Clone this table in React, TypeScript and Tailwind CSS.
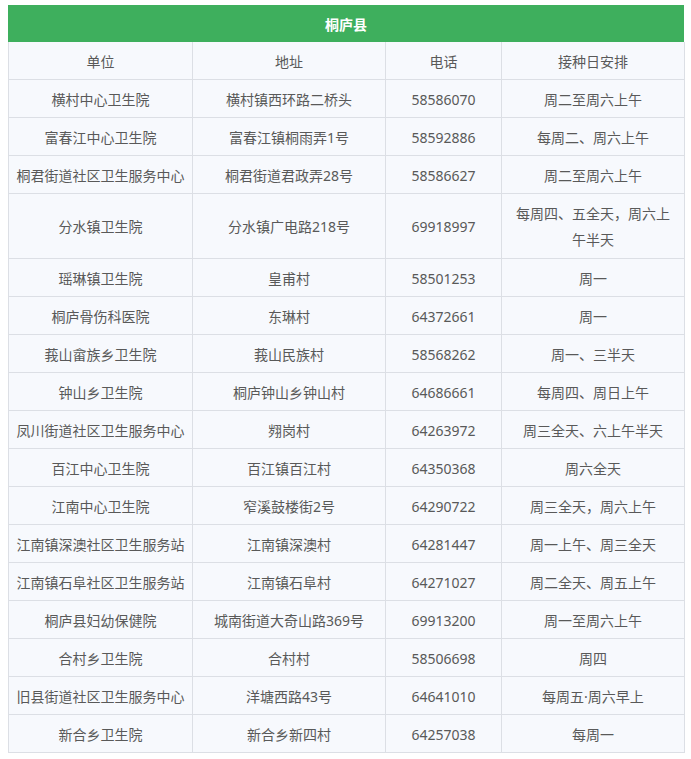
import React from "react";

const rows: [string, string, string, React.ReactNode, boolean?][] = [
  ["横村中心卫生院", "横村镇西环路二桥头", "58586070", "周二至周六上午"],
  ["富春江中心卫生院", "富春江镇桐雨弄1号", "58592886", "每周二、周六上午"],
  ["桐君街道社区卫生服务中心", "桐君街道君政弄28号", "58586627", "周二至周六上午"],
  ["分水镇卫生院", "分水镇广电路218号", "69918997", (<>每周四、五全天，周六上<br />午半天</>), true],
  ["瑶琳镇卫生院", "皇甫村", "58501253", "周一"],
  ["桐庐骨伤科医院", "东琳村", "64372661", "周一"],
  ["莪山畲族乡卫生院", "莪山民族村", "58568262", "周一、三半天"],
  ["钟山乡卫生院", "桐庐钟山乡钟山村", "64686661", "每周四、周日上午"],
  ["凤川街道社区卫生服务中心", "翙岗村", "64263972", "周三全天、六上午半天"],
  ["百江中心卫生院", "百江镇百江村", "64350368", "周六全天"],
  ["江南中心卫生院", "窄溪鼓楼街2号", "64290722", "周三全天，周六上午"],
  ["江南镇深澳社区卫生服务站", "江南镇深澳村", "64281447", "周一上午、周三全天"],
  ["江南镇石阜社区卫生服务站", "江南镇石阜村", "64271027", "周二全天、周五上午"],
  ["桐庐县妇幼保健院", "城南街道大奇山路369号", "69913200", "周一至周六上午"],
  ["合村乡卫生院", "合村村", "58506698", "周四"],
  ["旧县街道社区卫生服务中心", "洋塘西路43号", "64641010", "每周五·周六早上"],
  ["新合乡卫生院", "新合乡新四村", "64257038", "每周一"],
];

function Cell({ children, tall }: { children: React.ReactNode; tall?: boolean }) {
  return (
    <div
      className={`flex items-center justify-center text-center whitespace-nowrap border-r border-b border-[#dcdfe5] leading-[26px] pt-[2px] ${tall ? "h-[65px]" : "h-[38px]"}`}
    >
      <span>{children}</span>
    </div>
  );
}

export default function App() {
  return (
    <div className="bg-white w-[691px] h-[759px] pt-[5px] pl-[8px] font-['Noto_Sans','Noto_Sans_CJK_SC',sans-serif] text-[14px] text-[#595959]">
      <div className="w-[676px]">
        <div className="h-[37px] bg-[#3eaf5d] flex items-center justify-center text-white font-bold pt-[1px]">
          桐庐县
        </div>
        <div className="grid grid-cols-[184px_193px_116px_183px] border-l border-[#dcdfe5] bg-[#f7f9fd]">
          <Cell>单位</Cell>
          <Cell>地址</Cell>
          <Cell>电话</Cell>
          <Cell>接种日安排</Cell>
          {rows.map((r, i) => (
            <React.Fragment key={i}>
              <Cell tall={r[4]}>{r[0]}</Cell>
              <Cell tall={r[4]}>{r[1]}</Cell>
              <Cell tall={r[4]}>{r[2]}</Cell>
              <Cell tall={r[4]}>{r[3]}</Cell>
            </React.Fragment>
          ))}
        </div>
      </div>
    </div>
  );
}
